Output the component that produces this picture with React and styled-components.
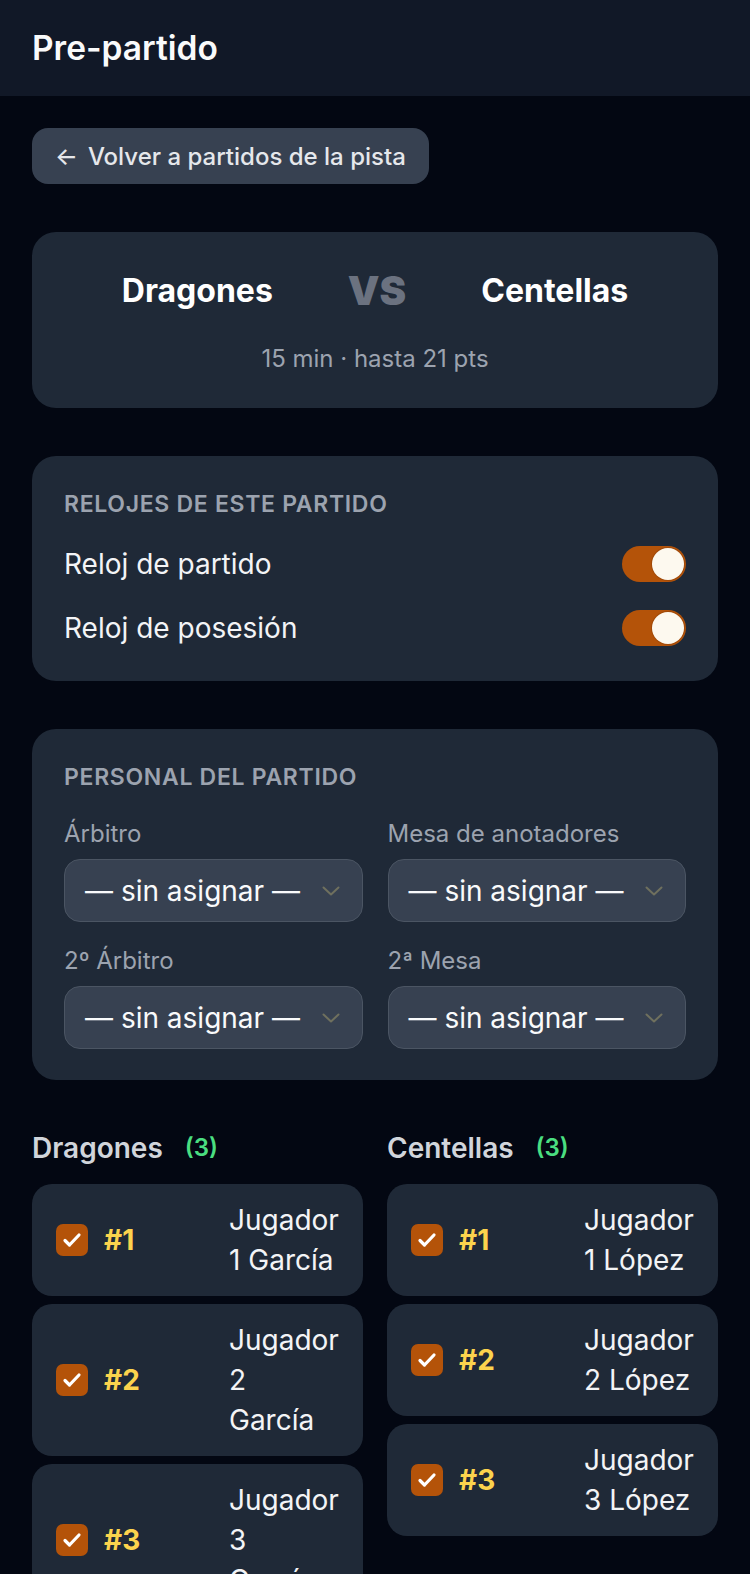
import React, { useState } from "react";
import styled, { createGlobalStyle } from "styled-components";

const GlobalStyle = createGlobalStyle`
  * { box-sizing: border-box; }
  body {
    margin: 0;
    background: #030712;
    font-family: Inter, "Noto Sans", sans-serif;
    color: #f3f4f6;
  }
`;

const teams = [
    {
        name: "Dragones",
        players: [
            { num: 1, name: "Jugador 1 García" },
            { num: 2, name: "Jugador 2 García" },
            { num: 3, name: "Jugador 3 García" },
        ],
    },
    {
        name: "Centellas",
        players: [
            { num: 1, name: "Jugador 1 López" },
            { num: 2, name: "Jugador 2 López" },
            { num: 3, name: "Jugador 3 López" },
        ],
    },
];

const staff = ["Árbitro", "Mesa de anotadores", "2º Árbitro", "2ª Mesa"];

const Toggle = ({ on, onClick }) => (
    <Switch $on={on} onClick={onClick}>
        <Knob $on={on} />
    </Switch>
);

const Chevron = () => (
    <svg width="18" height="10" viewBox="0 0 18 10" fill="none">
        <path d="M1.5 1.5L9 8.5L16.5 1.5" stroke="#6f705e" strokeWidth="2" strokeLinecap="round" strokeLinejoin="round" />
    </svg>
);

const Check = () => (
    <svg width="20" height="16" viewBox="0 0 20 16" fill="none">
        <path d="M3 8.5L7.5 13L17 3" stroke="#fff" strokeWidth="3.2" strokeLinecap="round" strokeLinejoin="round" />
    </svg>
);

const App = () => {
    const [clocks, setClocks] = useState({ game: true, possession: true });

    return (
        <>
            <GlobalStyle />
            <Header>
                <Title>Pre-partido</Title>
            </Header>
            <Main>
                <div>
                    <BackButton>
                        <span>←</span> Volver a partidos de la pista
                    </BackButton>
                </div>

                <Card $pad="39px 32px 33px">
                    <Teams>
                        <TeamName>Dragones</TeamName>
                        <Vs>VS</Vs>
                        <TeamName>Centellas</TeamName>
                    </Teams>
                    <Meta>15 min · hasta 21 pts</Meta>
                </Card>

                <Card $pad="32px 32px 35px">
                    <SectionTitle>Relojes de este partido</SectionTitle>
                    <ClockRows>
                        <ClockRow>
                            Reloj de partido
                            <Toggle
                                on={clocks.game}
                                onClick={() => setClocks({ ...clocks, game: !clocks.game })}
                            />
                        </ClockRow>
                        <ClockRow>
                            Reloj de posesión
                            <Toggle
                                on={clocks.possession}
                                onClick={() => setClocks({ ...clocks, possession: !clocks.possession })}
                            />
                        </ClockRow>
                    </ClockRows>
                </Card>

                <Card $pad="32px 32px 31px">
                    <SectionTitle>Personal del partido</SectionTitle>
                    <StaffGrid>
                        {staff.map((role) => (
                            <Field key={role}>
                                <FieldLabel>{role}</FieldLabel>
                                <Select>
                                    — sin asignar —
                                    <Chevron />
                                </Select>
                            </Field>
                        ))}
                    </StaffGrid>
                </Card>

                <Rosters>
                    {teams.map((team) => (
                        <Roster key={team.name}>
                            <RosterHead>
                                {team.name}
                                <Count>({team.players.length})</Count>
                            </RosterHead>
                            <PlayerList>
                                {team.players.map((p) => (
                                    <Player key={p.num}>
                                        <Box>
                                            <Check />
                                        </Box>
                                        <Num>#{p.num}</Num>
                                        <PlayerName>{p.name}</PlayerName>
                                    </Player>
                                ))}
                            </PlayerList>
                        </Roster>
                    ))}
                </Rosters>
            </Main>
        </>
    );
};

export default App;

const Header = styled.header`
    height: 96px;
    padding: 0 32px;
    display: flex;
    align-items: center;
    background: #111827;
`;

const Title = styled.h1`
    margin: 0;
    font-size: 33.5px;
    font-weight: 600;
    color: #f9fafb;
`;

const Main = styled.main`
    padding: 32px;
    display: flex;
    flex-direction: column;
    gap: 48px;
`;

const BackButton = styled.button`
    height: 56px;
    padding: 0 23px;
    display: inline-flex;
    align-items: center;
    gap: 10px;
    border: none;
    border-radius: 16px;
    background: #374151;
    color: #e5e7eb;
    font-family: inherit;
    font-size: 24px;
    font-weight: 500;
    cursor: pointer;
`;

const Card = styled.section`
    background: #1f2937;
    border-radius: 24px;
    padding: ${(p) => p.$pad};
`;

const Teams = styled.div`
    display: flex;
    justify-content: center;
    align-items: center;
    gap: 75px;
`;

const TeamName = styled.div`
    font-size: 32px;
    font-weight: 700;
    line-height: 40px;
    color: #ffffff;
`;

const Vs = styled.div`
    font-size: 40px;
    font-weight: 900;
    line-height: 40px;
    color: #6b7280;
`;

const Meta = styled.div`
    margin-top: 32px;
    text-align: center;
    font-size: 24px;
    line-height: 32px;
    color: #9ca3af;
`;

const SectionTitle = styled.h2`
    margin: 0;
    font-size: 23px;
    line-height: 32px;
    font-weight: 600;
    letter-spacing: 0.03em;
    text-transform: uppercase;
    color: #9ca3af;
`;

const ClockRows = styled.div`
    margin-top: 26px;
    display: flex;
    flex-direction: column;
    gap: 28px;
`;

const ClockRow = styled.label`
    display: flex;
    align-items: center;
    justify-content: space-between;
    font-size: 28px;
    color: #f3f4f6;
`;

const Switch = styled.button`
    width: 64px;
    height: 36px;
    padding: 2px;
    border: none;
    border-radius: 18px;
    display: flex;
    justify-content: ${(p) => (p.$on ? "flex-end" : "flex-start")};
    background: ${(p) => (p.$on ? "#b45309" : "#4b5563")};
    cursor: pointer;
`;

const Knob = styled.span`
    width: 32px;
    height: 32px;
    border-radius: 50%;
    background: #fdf9ef;
    box-shadow: 0 0 0 1px #a14a08;
`;

const StaffGrid = styled.div`
    margin-top: 26px;
    display: grid;
    grid-template-columns: 1fr 1fr;
    column-gap: 25px;
    row-gap: 24px;
`;

const Field = styled.div`
    display: flex;
    flex-direction: column;
    gap: 10px;
`;

const FieldLabel = styled.span`
    font-size: 24px;
    line-height: 30px;
    color: #9ca3af;
`;

const Select = styled.div`
    height: 63px;
    padding: 0 22px 0 20px;
    display: flex;
    align-items: center;
    justify-content: space-between;
    border: 1px solid #4b5563;
    border-radius: 16px;
    background: #374151;
    font-size: 28px;
    color: #f9fafb;
`;

const Rosters = styled.div`
    display: grid;
    grid-template-columns: 1fr 1fr;
    gap: 24px;
    align-items: start;
`;

const Roster = styled.div`
    display: flex;
    flex-direction: column;
`;

const RosterHead = styled.h3`
    margin: 0 0 16px;
    display: flex;
    align-items: center;
    gap: 22px;
    font-size: 28px;
    line-height: 40px;
    font-weight: 600;
    color: #d1d5db;
`;

const Count = styled.span`
    font-size: 24px;
    color: #4ade80;
`;

const PlayerList = styled.div`
    display: flex;
    flex-direction: column;
    gap: 8px;
`;

const Player = styled.label`
    padding: 16px 24px;
    display: flex;
    align-items: center;
    gap: 16px;
    border-radius: 20px;
    background: #1f2937;
`;

const Box = styled.span`
    width: 32px;
    height: 32px;
    flex-shrink: 0;
    display: flex;
    align-items: center;
    justify-content: center;
    border-radius: 7px;
    background: #b45309;
`;

const Num = styled.span`
    width: 109px;
    flex-shrink: 0;
    font-size: 28px;
    font-weight: 700;
    color: #fcd34d;
`;

const PlayerName = styled.span`
    flex: 1;
    min-width: 0;
    font-size: 28px;
    line-height: 40px;
    color: #f3f4f6;
`;
